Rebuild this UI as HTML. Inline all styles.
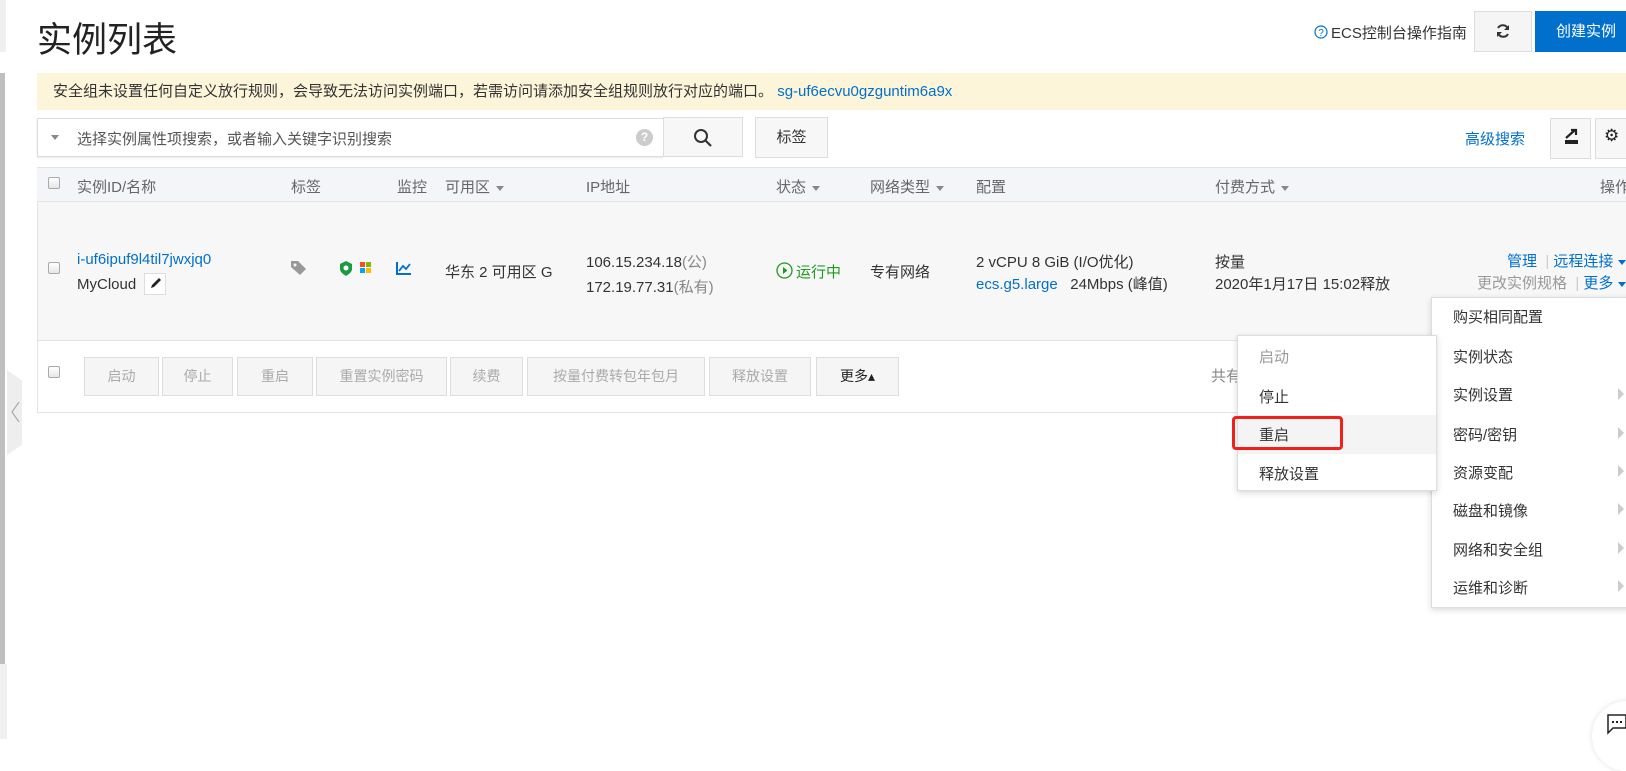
<!DOCTYPE html>
<html><head><meta charset="utf-8">
<style>
*{box-sizing:border-box;margin:0;padding:0}
body{width:1626px;height:739px;overflow:hidden;background:#fff;font-family:"Liberation Sans","Noto Sans CJK SC",sans-serif;font-size:15px;color:#333;position:relative}
.a{position:absolute;white-space:nowrap}
.blue{color:#0070cc}
.btn{position:absolute;border:1px solid #ddd;background:#f5f5f5;color:#aaa;text-align:center;line-height:37px;font-size:14px}
.cb{position:absolute;width:12px;height:12px;border:1px solid #aaa;border-radius:2px;background:linear-gradient(#fff,#e6e6e6)}
.hd{color:#666}
.tri{display:inline-block;width:0;height:0;border-left:4px solid transparent;border-right:4px solid transparent;border-top:5px solid #888;margin-left:6px;vertical-align:middle}
.mi{position:absolute;left:21px;font-size:15px;color:#333}
.arr{position:absolute;left:186px;width:0;height:0;border-top:6px solid transparent;border-bottom:6px solid transparent;border-left:6px solid #ccc}
</style></head><body>
<div class="a" style="left:0;top:0;width:6px;height:52px;background:#f0f0f0"></div>
<div class="a" style="left:0;top:73px;width:5px;height:591px;background:#bfbfbf"></div>
<div class="a" style="left:0;top:664px;width:7px;height:75px;background:#f0f0f0"></div>
<div class="a" style="left:7px;top:370px;width:15px;height:85px;background:#eee;clip-path:polygon(0 0,100% 12%,100% 88%,0 100%)"></div>
<svg class="a" style="left:9px;top:400px" width="12" height="24"><path d="M10 2 L3 12 L10 22" stroke="#aaa" fill="none" stroke-width="1.2"/></svg>

<div class="a" style="left:37px;top:12px;font-size:35px;color:#222">实例列表</div>

<svg class="a" style="left:1314px;top:25px" width="14" height="14"><circle cx="7" cy="7" r="6" fill="none" stroke="#0070cc" stroke-width="1.2"/><text x="7" y="11" font-size="10" text-anchor="middle" fill="#0070cc" font-family="Liberation Sans">?</text></svg>
<div class="a" style="left:1331px;top:22px;font-size:15px">ECS控制台操作指南</div>
<div class="a" style="left:1474px;top:11px;width:58px;height:41px;border:1px solid #ddd;background:#f5f5f5"></div>
<svg class="a" style="left:1495px;top:23px" width="16" height="16" viewBox="0 0 16 16"><path d="M13 6 A5.5 5.5 0 0 0 3 5 M3 10 A5.5 5.5 0 0 0 13 11" stroke="#333" stroke-width="2" fill="none"/><path d="M14 2 L14 7 L9 7Z M2 14 L2 9 L7 9Z" fill="#333"/></svg>
<div class="a" style="left:1535px;top:11px;width:91px;height:41px;background:#0070cc;color:#fff;font-size:15px;line-height:41px;padding-left:21px">创建实例</div>

<div class="a" style="left:37px;top:73px;width:1589px;height:37px;background:#fdf5da;line-height:37px;padding-left:16px;color:#333">安全组未设置任何自定义放行规则，会导致无法访问实例端口，若需访问请添加安全组规则放行对应的端口。 <span class="blue">sg-uf6ecvu0gzguntim6a9x</span></div>

<div class="a" style="left:37px;top:118px;width:626px;height:39px;border:1px solid #ddd;border-right:none;box-shadow:0 1px 2px rgba(0,0,0,.1)"></div>
<div class="a" style="left:51px;top:135px;width:0;height:0;border-left:4px solid transparent;border-right:4px solid transparent;border-top:5px solid #888"></div>
<div class="a" style="left:77px;top:128px;color:#555">选择实例属性项搜索，或者输入关键字识别搜索</div>
<div class="a" style="left:636px;top:129px;width:17px;height:17px;border-radius:50%;background:#ccc;color:#fff;font-size:12px;font-weight:bold;text-align:center;line-height:17px">?</div>
<div class="a" style="left:663px;top:117px;width:80px;height:40px;border:1px solid #ddd;background:#f7f7f7"></div>
<svg class="a" style="left:693px;top:128px" width="20" height="20"><circle cx="8" cy="8" r="6" fill="none" stroke="#333" stroke-width="2"/><path d="M12.5 12.5 L18 18" stroke="#333" stroke-width="2.2"/></svg>
<div class="a" style="left:755px;top:117px;width:73px;height:41px;border:1px solid #ddd;background:#f7f7f7;text-align:center;line-height:39px;font-size:15px">标签</div>
<div class="a blue" style="left:1465px;top:128px;font-size:15px">高级搜索</div>
<div class="a" style="left:1550px;top:118px;width:41px;height:41px;border:1px solid #ddd;background:#f7f7f7"></div>
<svg class="a" style="left:1562px;top:128px" width="18" height="18"><rect x="3" y="12" width="13" height="4" fill="#222"/><path d="M4 10 L13 2 M9 2 H14 V7" stroke="#222" stroke-width="2.2" fill="none"/></svg>
<div class="a" style="left:1595px;top:118px;width:31px;height:41px;border:1px solid #ddd;border-right:none;background:#f7f7f7"></div>
<div class="a" style="left:1604px;top:126px;font-size:17px;color:#222">⚙</div>

<div class="a" style="left:37px;top:167px;width:1589px;height:35px;background:#f4f5f9;border-top:1px solid #e3e3e3;border-bottom:1px solid #e3e3e3"></div>
<div class="a" style="left:37px;top:202px;width:1589px;height:139px;background:#f7f7f7;border-left:1px solid #e3e3e3;border-bottom:1px solid #e3e3e3"></div>
<div class="a" style="left:37px;top:341px;width:1589px;height:72px;border-left:1px solid #e3e3e3;border-bottom:1px solid #e3e3e3"></div>
<div class="cb" style="left:48px;top:177px"></div>
<div class="a hd" style="left:77px;top:176px">实例ID/名称</div>
<div class="a hd" style="left:291px;top:176px">标签</div>
<div class="a hd" style="left:397px;top:176px">监控</div>
<div class="a hd" style="left:445px;top:176px">可用区<span class="tri"></span></div>
<div class="a hd" style="left:586px;top:176px">IP地址</div>
<div class="a hd" style="left:776px;top:176px">状态<span class="tri"></span></div>
<div class="a hd" style="left:870px;top:176px">网络类型<span class="tri"></span></div>
<div class="a hd" style="left:976px;top:176px">配置</div>
<div class="a hd" style="left:1215px;top:176px">付费方式<span class="tri"></span></div>
<div class="a hd" style="left:1600px;top:176px">操作</div>

<div class="cb" style="left:48px;top:262px"></div>
<div class="a blue" style="left:77px;top:251px">i-uf6ipuf9l4til7jwxjq0</div>
<div class="a" style="left:77px;top:276px">MyCloud</div>
<div class="a" style="left:144px;top:273px;width:22px;height:22px;border:1px solid #ddd;background:#fff"></div>
<svg class="a" style="left:148px;top:276px" width="15" height="15"><path d="M3 12 L4 9 L11 2 L13 4 L6 11 Z" fill="#222"/></svg>
<svg class="a" style="left:290px;top:260px" width="18" height="16"><path d="M1 1 H8 L16 9 L10 15 L1 7 Z" fill="#999"/><circle cx="5" cy="5" r="1.5" fill="#f7f7f7"/></svg>
<svg class="a" style="left:339px;top:261px" width="14" height="15"><path d="M7 0 L13 3 V8 C13 11 10 13 7 15 C4 13 1 11 1 8 V3Z" fill="#1a9c3e"/><circle cx="7" cy="7" r="2.5" fill="#fff"/></svg>
<svg class="a" style="left:360px;top:262px" width="12" height="12"><rect x="0" y="0" width="5" height="5" fill="#f25022"/><rect x="6" y="0" width="5" height="5" fill="#7fba00"/><rect x="0" y="6" width="5" height="5" fill="#00a4ef"/><rect x="6" y="6" width="5" height="5" fill="#ffb900"/></svg>
<svg class="a" style="left:396px;top:261px" width="16" height="14"><path d="M1 1 V13 H15" stroke="#0070cc" stroke-width="2" fill="none"/><path d="M3 10 L7 5 L10 8 L14 3" stroke="#0070cc" stroke-width="1.8" fill="none"/></svg>
<div class="a" style="left:445px;top:261px">华东 2 可用区 G</div>
<div class="a" style="left:586px;top:251px">106.15.234.18<span style="color:#888">(公)</span></div>
<div class="a" style="left:586px;top:276px">172.19.77.31<span style="color:#888">(私有)</span></div>
<svg class="a" style="left:776px;top:262px" width="17" height="17"><circle cx="8.5" cy="8.5" r="7.5" fill="none" stroke="#1e9a1e" stroke-width="1.3"/><path d="M7 5 L11.5 8.5 L7 12Z" fill="#1e9a1e"/></svg>
<div class="a" style="left:796px;top:261px;color:#1e9a1e">运行中</div>
<div class="a" style="left:870px;top:261px">专有网络</div>
<div class="a" style="left:976px;top:251px">2 vCPU 8 GiB (I/O优化)</div>
<div class="a" style="left:976px;top:273px"><span class="blue">ecs.g5.large</span>&nbsp;&nbsp;&nbsp;24Mbps (峰值)</div>
<div class="a" style="left:1215px;top:251px">按量</div>
<div class="a" style="left:1215px;top:273px">2020年1月17日 15:02释放</div>
<div class="a" style="left:1507px;top:250px"><span class="blue">管理</span> <span style="color:#ccc">&nbsp;|&nbsp;</span><span class="blue">远程连接</span> <span style="display:inline-block;border-left:4px solid transparent;border-right:4px solid transparent;border-top:5px solid #0070cc;vertical-align:middle"></span></div>
<div class="a" style="left:1477px;top:272px"><span style="color:#999">更改实例规格</span> <span style="color:#ccc">&nbsp;|&nbsp;</span><span class="blue">更多</span> <span style="display:inline-block;border-left:4px solid transparent;border-right:4px solid transparent;border-top:5px solid #0070cc;vertical-align:middle"></span></div>

<div class="cb" style="left:48px;top:366px"></div>
<div class="btn" style="left:84px;top:357px;width:75px;height:39px">启动</div>
<div class="btn" style="left:162px;top:357px;width:71px;height:39px">停止</div>
<div class="btn" style="left:237px;top:357px;width:76px;height:39px">重启</div>
<div class="btn" style="left:316px;top:357px;width:131px;height:39px">重置实例密码</div>
<div class="btn" style="left:450px;top:357px;width:73px;height:39px">续费</div>
<div class="btn" style="left:527px;top:357px;width:178px;height:39px">按量付费转包年包月</div>
<div class="btn" style="left:709px;top:357px;width:102px;height:39px">释放设置</div>
<div class="btn" style="left:816px;top:357px;width:83px;height:39px;color:#222">更多▴</div>
<div class="a" style="left:1211px;top:365px;color:#888">共有</div>

<div class="a" style="left:1431px;top:297px;width:200px;height:311px;background:#fff;border:1px solid #ddd;box-shadow:0 2px 6px rgba(0,0,0,.15)">
<div class="mi" style="top:8px">购买相同配置</div>
<div class="mi" style="top:48px">实例状态</div>
<div class="mi" style="top:86px">实例设置</div><div class="arr" style="top:90px"></div>
<div class="mi" style="top:126px">密码/密钥</div><div class="arr" style="top:129px"></div>
<div class="mi" style="top:164px">资源变配</div><div class="arr" style="top:167px"></div>
<div class="mi" style="top:202px">磁盘和镜像</div><div class="arr" style="top:205px"></div>
<div class="mi" style="top:241px">网络和安全组</div><div class="arr" style="top:244px"></div>
<div class="mi" style="top:279px">运维和诊断</div><div class="arr" style="top:282px"></div>
</div>
<div class="a" style="left:1237px;top:335px;width:200px;height:156px;background:#fff;border:1px solid #ddd;box-shadow:0 2px 6px rgba(0,0,0,.15)">
<div class="mi" style="top:10px;color:#999">启动</div>
<div class="mi" style="top:50px">停止</div>
<div style="position:absolute;left:0;top:79px;width:198px;height:39px;background:#f4f4f4"></div>
<div class="mi" style="top:88px">重启</div>
<div class="mi" style="top:127px">释放设置</div>
</div>
<div class="a" style="left:1232px;top:416px;width:111px;height:34px;border:3px solid #f0201a;border-radius:4px"></div>

<div class="a" style="left:1592px;top:701px;width:70px;height:70px;border-radius:50%;background:#fff;box-shadow:0 0 6px rgba(0,0,0,.12)"></div>
<svg class="a" style="left:1607px;top:713px" width="20" height="22"><path d="M1 2 H19 V15 H6 L1 20 Z" fill="none" stroke="#222" stroke-width="1.5"/><rect x="5" y="8" width="2" height="2" fill="#222"/><rect x="9" y="8" width="2" height="2" fill="#222"/><rect x="13" y="8" width="2" height="2" fill="#222"/></svg>
</body></html>
